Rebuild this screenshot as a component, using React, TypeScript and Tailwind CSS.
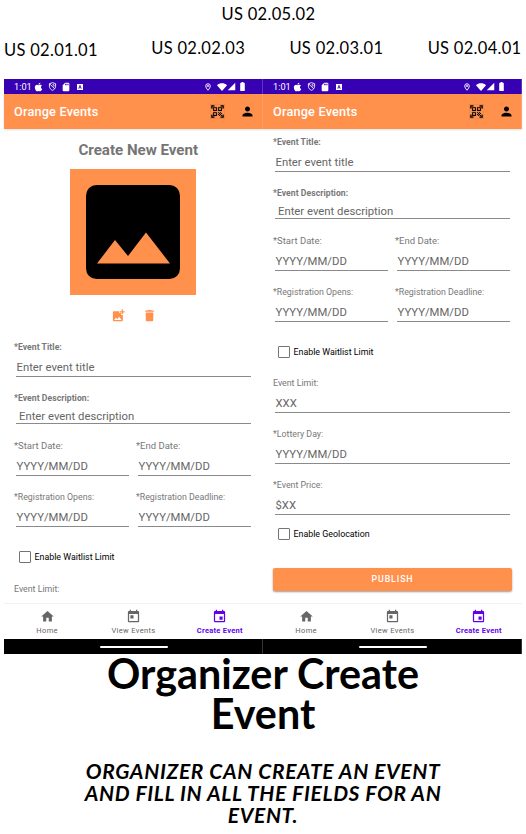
import type { ReactNode } from "react";
import {
  MdAddPhotoAlternate,
  MdBatteryFull,
  MdDelete,
  MdEvent,
  MdHome,
  MdPerson,
  MdQrCodeScanner,
  MdSdCard,
  MdSignalCellular4Bar,
  MdToday,
} from "react-icons/md";
import { FaApple } from "react-icons/fa";

const roboto = "font-['Roboto',sans-serif]";
const lato = "font-['Lato',sans-serif]";

function StatusBar() {
  return (
    <div className="flex h-[15px] items-center bg-[#3700b3] pl-[10px] pr-[15px] text-white shadow-[inset_-1px_0_rgba(255,255,255,0.2)]">
      <span className="w-[20px] text-[9.2px] leading-[15px]">1:01</span>
      <FaApple className="h-[10px] w-[9px]" />
      <svg viewBox="0 0 16 16" className="ml-[5px] h-[9px] w-[9px]" fill="none" stroke="currentColor" strokeWidth="1.6">
        <path d="M8 1.2 2.5 3v4.5c0 3.4 2.3 6 5.5 7.3 3.2-1.3 5.5-3.9 5.5-7.3V3zM3 3.5l9 8.5" />
        <path d="M8 5h2.5v3" />
      </svg>
      <MdSdCard className="ml-[4px] h-[10px] w-[10px]" />
      <svg viewBox="0 0 14 14" className="ml-[6px] h-[6px] w-[6px]">
        <path fill="currentColor" d="M0 0h14v14H0z" />
        <path fill="none" stroke="#3700b3" strokeWidth="1.8" d="M4 11 7 3l3 8M5 8.5h4" />
      </svg>
      <svg viewBox="0 0 12 16" className="ml-auto h-[8px] w-[6px]" fill="none" stroke="currentColor" strokeWidth="1.9">
        <path d="M6 14.5C3.5 11.5 1.5 8.8 1.5 6a4.5 4.5 0 0 1 9 0c0 2.8-2 5.5-4.5 8.5z" />
        <circle cx="6" cy="6" r="1.2" />
      </svg>
      <svg viewBox="0 0 20 16" className="ml-[6px] h-[8px] w-[10px]" fill="currentColor">
        <path d="M10 16 0 4.5C5.500-.8 14.500-.8 20 4.5z" />
      </svg>
      <MdSignalCellular4Bar className="h-[9px] w-[9px]" />
      <MdBatteryFull className="ml-[1px] h-[11px] w-[11px]" />
    </div>
  );
}

function AppBar() {
  return (
    <div className="relative flex h-[35px] items-center bg-[#ff914d] pl-[10px] pr-[8px] shadow-[0_1px_2px_rgba(0,0,0,0.12),inset_-1px_0_rgba(255,255,255,0.2)]">
      <span className="pt-[1px] text-[12.7px] font-medium tracking-[0.2px] text-white">Orange Events</span>
      <MdQrCodeScanner className="ml-auto h-[15px] w-[15px] stroke-black stroke-[0.2] text-black" />
      <MdPerson className="ml-[15px] h-[15px] w-[15px] text-black" />
    </div>
  );
}

type FieldProps = { label: string; value: string; variant?: "bold" | "plain" | "small"; short?: boolean };

const labelStyles = {
  bold: "text-[8.6px] font-bold tracking-[0.06px]",
  plain: "text-[9.5px]",
  small: "text-[8.8px]",
};

function Field({ label, value, variant = "small", short = false }: FieldProps) {
  return (
    <div className="flex-1">
      <div className={`h-[10px] whitespace-nowrap leading-[10px] text-[#787878] ${labelStyles[variant]}`}>{label}</div>
      <div
        className={`ml-[2px] whitespace-nowrap border-b border-[#8a8a8a] text-[11.3px] leading-[14px] text-[#666666] ${
          short ? "h-[21px] pl-[3px] pt-[7px]" : "h-[25px] pl-[0.5px] pt-[9px]"
        }`}
      >
        {value}
      </div>
    </div>
  );
}

function MainFields() {
  return (
    <>
      <Field label="*Event Title:" value="Enter event title" variant="bold" />
      <div className="mt-[16px]">
        <Field label="*Event Description:" value="Enter event description" variant="bold" short />
      </div>
      <div className="mt-[17px] flex gap-[7.5px]">
        <Field label="*Start Date:" value="YYYY/MM/DD" variant="plain" />
        <Field label="*End Date:" value="YYYY/MM/DD" variant="plain" />
      </div>
      <div className="mt-[16px] flex gap-[7.5px]">
        <Field label="*Registration Opens:" value="YYYY/MM/DD" />
        <Field label="*Registration Deadline:" value="YYYY/MM/DD" />
      </div>
    </>
  );
}

function Checkbox({ children }: { children: ReactNode }) {
  return (
    <div className="flex h-[12px] items-center pl-[4.5px]">
      <span className="h-[12px] w-[12px] rounded-[1px] border-[1.5px] border-[#747474]" />
      <span className="ml-[4px] whitespace-nowrap text-[8.85px] leading-[12px] text-black">{children}</span>
    </div>
  );
}

function NavItem({ icon, label, active = false }: { icon: ReactNode; label: string; active?: boolean }) {
  return (
    <div className={`flex flex-1 flex-col items-center pt-[5px] ${active ? "text-[#6200ee]" : "text-[#666666]"}`}>
      {icon}
      <span className={`mt-[2px] text-[7.5px] leading-[10px] ${active ? "font-bold tracking-[0.28px]" : "tracking-[0.35px]"}`}>
        {label}
      </span>
    </div>
  );
}

function Phone({ children }: { children: ReactNode }) {
  return (
    <div className="flex h-[575px] w-[259px] flex-col bg-white">
      <StatusBar />
      <AppBar />
      <div className="h-[474px] overflow-hidden pl-[10px] pr-[12.5px]">{children}</div>
      <div className="flex h-[36px] border-t border-[#f2f2f2]">
        <NavItem icon={<MdHome className="h-[15px] w-[15px]" />} label="Home" />
        <NavItem icon={<MdToday className="h-[15px] w-[15px]" />} label="View Events" />
        <NavItem icon={<MdEvent className="h-[15px] w-[15px]" />} label="Create Event" active />
      </div>
      <div className="flex h-[15px] items-center justify-center bg-black shadow-[inset_-1px_0_rgba(255,255,255,0.2)]">
        <span className="h-[2px] w-[68px] rounded-full bg-white" />
      </div>
    </div>
  );
}

function Story({ children }: { children: ReactNode }) {
  return <span className="whitespace-nowrap">{children}</span>;
}

export default function App() {
  return (
    <div className={`h-[834px] w-[526px] overflow-hidden bg-white ${roboto}`}>
      <header className={`h-[79px] text-[16.5px] leading-[20px] tracking-[0.3px] text-black ${lato}`}>
        <div className="pl-[221.5px] pt-[4px]">
          <Story>US 02.05.02</Story>
        </div>
        <div className="flex justify-between pl-[4px] pr-[4.5px] pt-[14px]">
          <div className="pt-[2px]"><Story>US 02.01.01</Story></div>
          <div className="pl-[9px]"><Story>US 02.02.03</Story></div>
          <Story>US 02.03.01</Story>
          <Story>US 02.04.01</Story>
        </div>
      </header>

      <main className="flex pl-[4px]">
        <Phone>
          <h2 className="pl-[12px] pt-[11px] text-center text-[15.1px] font-bold leading-[20px] text-[#757575]">Create New Event</h2>
          <div className="ml-[56px] mt-[9px] h-[126px] w-[126px] bg-[#ff914d] p-[16px]">
            <svg viewBox="0 0 94 94" className="h-[94px] w-[94px]">
              <rect width="94" height="94" rx="10.5" fill="#000" />
              <path d="M11 78.5 29 55 42 71 60 47.5 84 78.5z" fill="#ff914d" />
            </svg>
          </div>
          <div className="flex gap-[16px] pl-[96.5px] pt-[13px] text-[#ff914d]">
            <MdAddPhotoAlternate className="h-[15px] w-[15px]" />
            <MdDelete className="h-[15px] w-[15px]" />
          </div>
          <div className="mt-[19px]">
            <MainFields />
          </div>
          <div className="mt-[24px]">
            <Checkbox>Enable Waitlist Limit</Checkbox>
          </div>
          <div className="mt-[21px] h-[10px] whitespace-nowrap text-[8.8px] leading-[10px] text-[#787878]">Event Limit:</div>
        </Phone>
        <Phone>
          <div className="pt-[8px]">
            <MainFields />
          </div>
          <div className="mt-[24px]">
            <Checkbox>Enable Waitlist Limit</Checkbox>
          </div>
          <div className="mt-[20px] flex flex-col gap-[16px]">
            <Field label="Event Limit:" value="XXX" />
            <Field label="*Lottery Day:" value="YYYY/MM/DD" />
            <Field label="*Event Price:" value="$XX" />
          </div>
          <div className="mt-[13px]">
            <Checkbox>Enable Geolocation</Checkbox>
          </div>
          <button className="mt-[28px] flex h-[23px] w-[239px] items-center justify-center rounded-[2px] bg-[#ff914d] text-[8.8px] font-medium tracking-[0.9px] text-white shadow-[0_1px_2px_rgba(0,0,0,0.4)]">
            PUBLISH
          </button>
        </Phone>
      </main>

      <footer className={`text-center text-black ${lato}`}>
        <h1 className="-mt-[1px] text-[41.3px] font-bold leading-[40px]">
          Organizer Create
          <br />
          Event
        </h1>
        <p className="mt-[27px] text-[21px] font-bold italic leading-[22px] tracking-[0.65px]">
          ORGANIZER CAN CREATE AN EVENT
          <br />
          AND FILL IN ALL THE FIELDS FOR AN
          <br />
          EVENT.
        </p>
      </footer>
    </div>
  );
}
